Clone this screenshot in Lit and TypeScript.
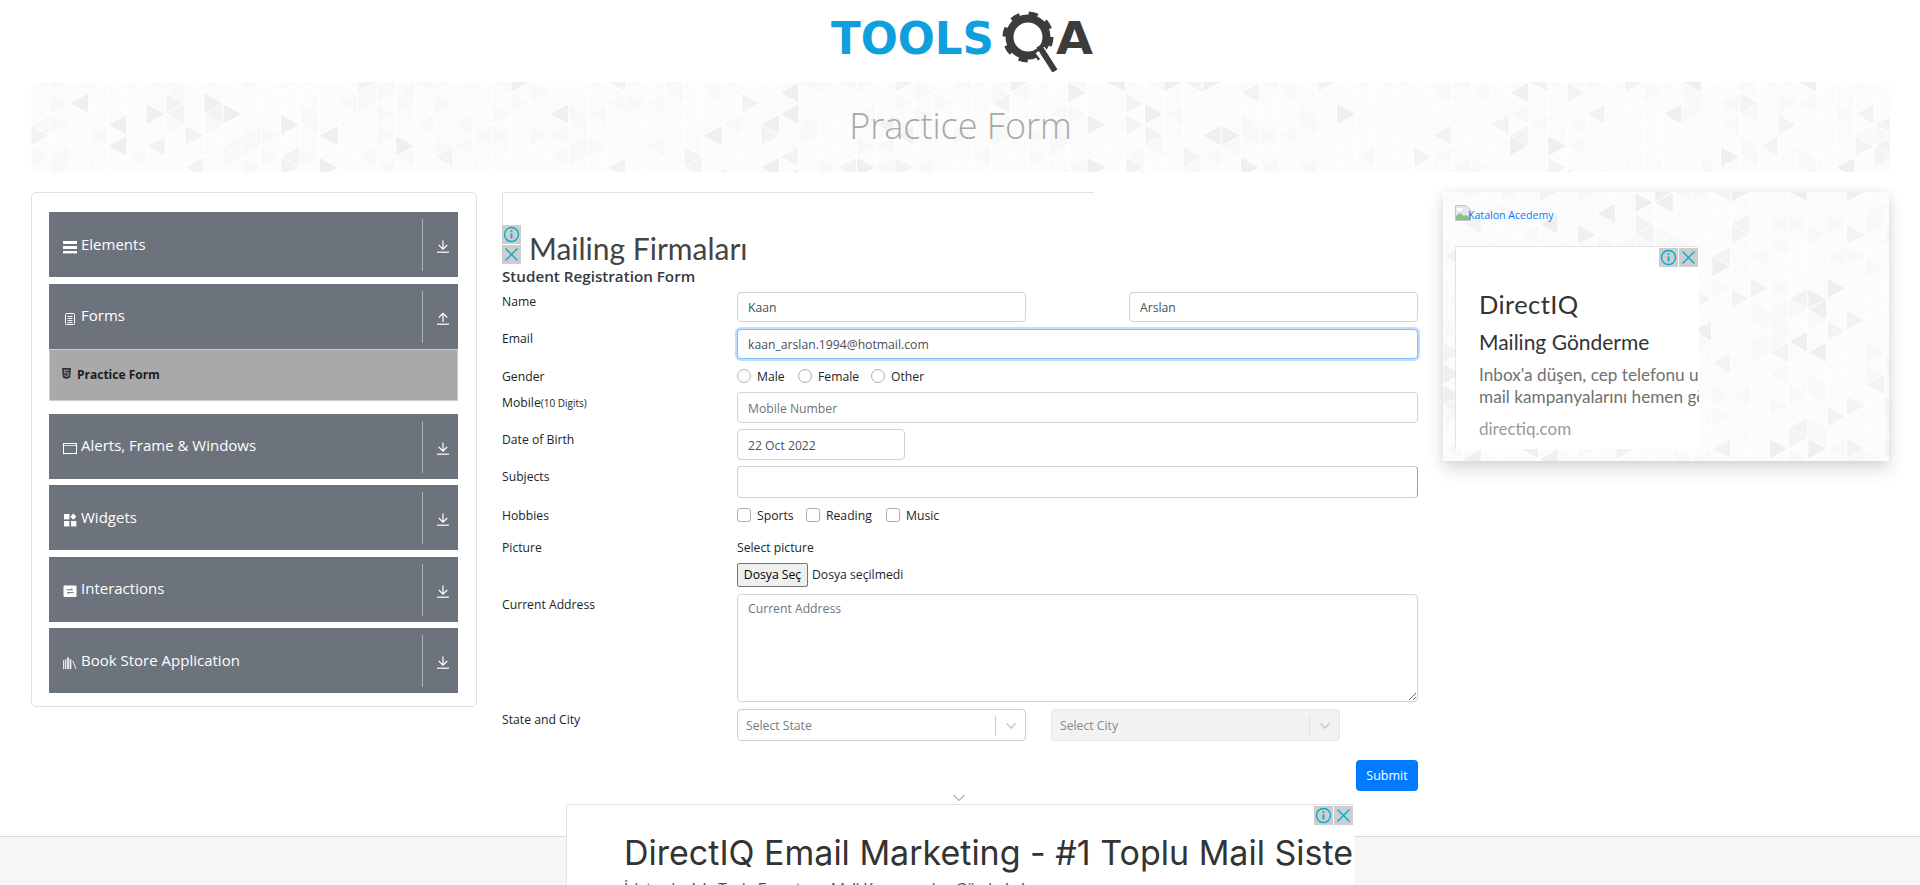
import { LitElement, html, css, svg } from "lit";
import { customElement, property } from "lit/decorators.js";

function triangles(width: number, height: number, seed: number) {
  const w = 19.2, h = 21.4;
  let s = seed;
  const rnd = () => { s = (s * 16807) % 2147483647; return s / 2147483647; };
  const out: string[] = [];
  const cols = Math.ceil(width / w) + 1;
  const rows = Math.ceil(height / h) + 2;
  const shade = () => {
    const r = rnd();
    if (r < 0.05) return "#efefef";
    if (r < 0.11) return "#f3f3f3";
    if (r < 0.28) return "#f8f8f8";
    if (r < 0.65) return "#fbfbfb";
    return "#fcfcfc";
  };
  for (let c = 0; c < cols; c++) {
    const x0 = c * w, x1 = x0 + w;
    const y0 = c % 2 ? h / 2 : 0;
    for (let r = -1; r < rows; r++) {
      const a = y0 + r * h;
      const b = a + h;
      const m = a + h / 2;
      out.push(`${x0},${a} ${x0},${b} ${x1},${m}`);
      out.push(`${x1},${m} ${x1},${m + h} ${x0},${b}`);
    }
  }
  return out.map((p) => ({ p, f: shade() }));
}

@customElement("tri-pattern")
class TriPattern extends LitElement {
  @property({ type: Number }) w = 400;
  @property({ type: Number }) h = 100;
  @property({ type: Number }) seed = 7;
  static styles = css`
    :host { position: absolute; inset: 0; overflow: hidden; display: block; }
    svg { display: block; }
    polygon { stroke: #ffffff; stroke-width: 1; }
  `;
  render() {
    return html`<svg width=${this.w} height=${this.h} aria-hidden="true">
      ${triangles(this.w, this.h, this.seed).map(
        (t) => svg`<polygon points=${t.p} fill=${t.f}></polygon>`
      )}
    </svg>`;
  }
}

const down = html`<svg width="12" height="13" viewBox="0 0 12 13" fill="none" stroke="#fff" stroke-width="1.2"><path d="M6 0.5V9M1.8 5L6 9.2L10.2 5"/><path d="M0 12.2H12"/></svg>`;
const up = html`<svg width="12" height="13" viewBox="0 0 12 13" fill="none" stroke="#fff" stroke-width="1.2"><path d="M6 10V1.5M1.8 5.5L6 1.3L10.2 5.5"/><path d="M0 12.2H12"/></svg>`;

const icons: Record<string, unknown> = {
  bars: html`<svg width="14" height="14" viewBox="0 0 14 14" fill="#fff"><rect y="1" width="14" height="3"/><rect y="6" width="14" height="3"/><rect y="11" width="14" height="2.4"/></svg>`,
  doc: html`<svg width="14" height="14" viewBox="0 0 14 14" fill="none" stroke="#fff" stroke-width="1"><rect x="2.5" y="2.5" width="9" height="11" rx="1"/><path d="M4.5 5.5H9.5M4.5 7.5H9.5M4.5 9.5H9.5M4.5 11.5H9.5" stroke-width=".9"/></svg>`,
  win: html`<svg width="14" height="14" viewBox="0 0 14 14" fill="none" stroke="#fff" stroke-width="1"><rect x=".5" y="2.5" width="13" height="10"/><path d="M.5 4.5H13.5" stroke-dasharray="2 .6"/></svg>`,
  widgets: html`<svg width="14" height="14" viewBox="0 0 14 14" fill="#fff"><rect x="1" y="1" width="5.4" height="5.4"/><path d="M10.3 .6L13.4 3.7L10.3 6.8L7.2 3.7Z"/><rect x="1" y="8" width="5.4" height="5.4"/><rect x="8" y="8" width="5.4" height="5.4"/></svg>`,
  inter: html`<svg width="14" height="14" viewBox="0 0 14 14"><rect x=".5" y="1.5" width="13" height="11.5" rx="1" fill="#fff"/><path d="M3.5 5.8H9.5L8 4.5M10.5 8.6H4.5L6 10" fill="none" stroke="#6c737c" stroke-width="1"/></svg>`,
  books: html`<svg width="15" height="14" viewBox="0 0 15 14" fill="#e8e8e8"><rect x="0" y="4" width="1.2" height="9.5"/><rect x="2" y="3" width="1.6" height="10.5"/><rect x="4.4" y="1" width="2.2" height="12.5"/><rect x="7.2" y="3" width="1.8" height="10.5"/><path d="M10 5L11 4.7L14.6 13.3L13.6 13.6Z"/></svg>`,
};

const infoSvg = html`<svg width="19" height="19" viewBox="0 0 19 19" fill="none" stroke="#00aecd" stroke-width="1.4"><circle cx="9.5" cy="9.5" r="7"/><path d="M9.5 8.4V13.4" stroke-width="1.8"/><path d="M9.5 5.2V6.9" stroke-width="1.8"/></svg>`;
const closeSvg = html`<svg width="19" height="19" viewBox="0 0 19 19" fill="none" stroke="#00aecd" stroke-width="1.4"><path d="M3.5 3.5L15.5 15.5M15.5 3.5L3.5 15.5"/></svg>`;

@customElement("app-root")
export class AppRoot extends LitElement {
  static styles = css`
    :host { display: block; font-family: "Open Sans", "Noto Sans", sans-serif; color: #212529; font-size: 12.2px; line-height: 20px; position: relative; overflow: hidden; height: 885px; background: #fff; }
    * { box-sizing: border-box; }
    .page { display: flex; flex-direction: column; height: 885px; }
    .head { height: 82px; display: flex; justify-content: center; flex: none; }
    .logo { display: block; margin-left: 12px; }
    .logo .t { font-family: "DejaVu Sans", "Liberation Sans", sans-serif; font-weight: 700; font-size: 45px; }
    .banner { position: relative; flex: none; margin: 0 30px 0 31px; height: 90px; display: flex; align-items: center; justify-content: center; overflow: hidden; }
    .banner h1 { position: relative; margin: 0 0 2px 0; font-weight: 300; font-size: 36px; line-height: 44px; color: #a8a8a8; }
    .main { flex: 1; display: grid; grid-template-columns: 446px 916px 446px; gap: 25px; padding: 20px 31px 0; align-items: start; min-height: 0; }
    .left { border: 1px solid #dfdfdf; border-radius: 5px; padding: 19px 18px 13px 17px; height: 515px; display: flex; flex-direction: column; }
    .grp { height: 65px; flex: none; margin-bottom: 6.6px; background: #6c737c; color: #fff; display: flex; align-items: stretch; font-size: 15px; }
    .grp.open { margin-bottom: 0; }
    .ic { width: 14px; margin-left: 14px; flex: none; display: flex; align-items: center; position: relative; top: 2px; }
    .ic svg { display: block; }
    .gt { margin-left: 4px; flex: 1; align-self: center; line-height: 22px; position: relative; top: -1px; white-space: nowrap; }
    .ar { width: 36px; margin: 7px 0 6px; border-left: 1px solid #adb1b6; padding: 21px 0 0 14px; flex: none; }
    .ar svg { display: block; }
    .sub { height: 52px; flex: none; margin-bottom: 13px; background: #a9a9a9; border: 1px solid #c9ccd1; display: flex; align-items: center; padding: 1px 0 0 12px; color: #1c1c20; font-weight: 700; font-size: 12px; }
    .sub svg { margin-right: 6px; display: block; position: relative; top: -2px; }
    .form { display: flex; flex-direction: column; min-width: 0; }
    .topad { position: relative; height: 73px; width: 592px; border-top: 1px solid #e3e3e3; flex: none; }
    .topad::before { content: ""; position: absolute; left: 0; top: 0; width: 1px; height: 32px; background: #e3e3e3; }
    .adbtns { position: absolute; left: 0; top: 32px; width: 20px; display: flex; flex-direction: column; gap: 1px; }
    .ab { width: 19px; height: 19px; background: #cdcdcd; display: block; flex: none; }
    .ab svg { display: block; }
    .adtitle { position: absolute; left: 27px; top: 35px; font: 400 30px/40px Lato, sans-serif; color: #444; white-space: nowrap; }
    .formh { margin: 0; font-size: 15.2px; font-weight: 600; line-height: 20px; height: 27px; padding-top: 1px; color: #343a40; flex: none; }
    .row { display: grid; grid-template-columns: 235px 681px; flex: none; margin-bottom: 6px; }
    .row.g7 { margin-bottom: 7px; }
    .lab { white-space: nowrap; padding-top: 1px; height: 20px; }
    .lab.top0 { padding-top: 0; }
    .lab small { font-size: 10px; }
    .in { display: block; width: 100%; height: 30px; border: 1px solid #ced4da; border-radius: 4px; padding: 1px 10px 0; font: inherit; color: #495057; background: #fff; outline: none; }
    .in::placeholder { color: #6c757d; opacity: 1; }
    .h31 { height: 31px; }
    .h32 { height: 32px; }
    .subject { border-right-color: #a0a0a0; }
    .in.focus { border-color: #80bdff; box-shadow: 0 0 0 2px rgba(0, 123, 255, 0.25); }
    .two { display: flex; justify-content: space-between; }
    .two .in { width: 289px; }
    .date { width: 168px; }
    .inl { display: flex; align-items: center; height: 20px; }
    .inl input { appearance: none; margin: 0 6px 0 0; width: 14px; height: 14px; background: #fff; border: 1px solid #a9b0b8; flex: none; }
    .inl input[type="radio"] { border-radius: 50%; }
    .inl input[type="checkbox"] { border-radius: 3px; }
    .inl span { white-space: nowrap; position: relative; top: 1px; }
    .w41 { width: 41px; }
    .w53 { width: 53px; }
    .w49 { width: 49px; }
    .w60 { width: 60px; }
    .pic { display: flex; flex-direction: column; }
    .filerow { display: flex; align-items: center; height: 24px; margin-top: 6px; }
    .filebtn { height: 24px; width: 71px; border: 1px solid #767676; border-radius: 2px; background: #efefef; font: inherit; color: #000; padding: 0; margin-right: 4px; white-space: nowrap; }
    textarea.in { height: 108px; padding: 4px 10px; resize: both; }
    .sels { display: flex; gap: 25px; }
    .sel { width: 289px; height: 32px; border: 1px solid #cccccc; border-radius: 4px; display: flex; align-items: center; padding: 1px 0 0 8px; color: #7a7a7a; background: #fff; position: relative; }
    .sel .v { flex: 1; }
    .sel .sep { width: 1px; height: 20px; background: #ccc; }
    .sel .cv { width: 29px; display: flex; justify-content: center; }
    .sel.off { background: #f2f2f2; border-color: #e6e6e6; color: #888; }
    .sel.off .sep { background: #e0e0e0; }
    .subm { align-self: flex-end; margin-top: 19px; height: 31px; width: 62px; padding: 0; border: 0; border-radius: 4px; background: #007bff; color: #fff; font: inherit; font-size: 12.5px; }
    .right { position: relative; height: 269px; box-shadow: 0 8px 16px rgba(0, 0, 0, 0.15), 0 0 8px rgba(0, 0, 0, 0.06); padding: 13px 12px 0; }
    .klink { position: relative; display: flex; align-items: flex-start; height: 41px; color: #007bff; font-size: 10.6px; line-height: 20px; white-space: nowrap; }
    .klink svg { display: block; flex: none; margin-right: -3px; }
    .radbox { position: relative; width: 244px; height: 203px; background: #fff; border-top: 1px solid #e3e3e3; border-left: 1px solid #e3e3e3; overflow: hidden; font-family: Lato, sans-serif; padding: 0 0 0 23px; white-space: nowrap; }
    .radbtns { position: absolute; top: 1px; right: 1px; display: flex; gap: 1px; }
    .r1 { font-size: 25.5px; line-height: 30px; margin-top: 42px; color: #333; letter-spacing: .4px; }
    .r2 { font-size: 21px; line-height: 26px; margin-top: 10px; color: #333; }
    .r3 { font-size: 17.2px; line-height: 22px; margin-top: 9px; color: #717171; }
    .r3b { margin-top: 0; }
    .r4 { font-size: 17px; line-height: 22px; margin-top: 10px; color: #9a9a9a; }
    .foot { flex: none; height: 49px; background: #f6f6f6; border-top: 1px solid #dcdcdc; }
    .botad { position: absolute; left: 566px; top: 804px; width: 788px; height: 81px; }
    .chev { position: absolute; left: 386px; top: -10px; display: block; }
    .botin { position: relative; width: 100%; height: 100%; background: #fff; border-top: 1px solid #e3e3e3; border-left: 1px solid #e3e3e3; overflow: hidden; padding-left: 57px; white-space: nowrap; font-family: Inter, sans-serif; }
    .bt { font-size: 34px; line-height: 44px; margin-top: 26px; color: #333; }
    .bs { font-size: 15px; line-height: 20px; margin-top: 3px; color: #555; font-family: Lato, sans-serif; }
  `;

  private grp(icon: string, label: string, open = false) {
    return html`<div class="grp ${open ? "open" : ""}">
      <span class="ic">${icons[icon]}</span>
      <span class="gt">${label}</span>
      <span class="ar">${open ? up : down}</span>
    </div>`;
  }

  render() {
    const chev = (c: string) => html`<svg width="12" height="8" viewBox="0 0 12 8" fill="none" stroke=${c} stroke-width="1.6"><path d="M1.5 1.5L6 6L10.5 1.5"/></svg>`;
    return html`
      <div class="page">
        <header class="head">
          <svg class="logo" width="270" height="72" viewBox="0 0 270 72" role="img" aria-label="Tools QA">
            <text class="t" x="0" y="54" fill="#0e9fdc" textLength="163" lengthAdjust="spacingAndGlyphs">TOOLS</text>
            <circle cx="197" cy="37" r="18.5" fill="none" stroke="#3c3c3c" stroke-width="8"/>
            <circle cx="197" cy="37" r="23" fill="none" stroke="#3c3c3c" stroke-width="5" stroke-dasharray="9 9.06"/>
            <path d="M209 50L226 72" stroke="#fff" stroke-width="11" fill="none"/>
            <path d="M208 46L224 71" stroke="#3c3c3c" stroke-width="6" fill="none"/>
            <text class="t" x="225" y="54" fill="#3c3c3c" textLength="37" lengthAdjust="spacingAndGlyphs">A</text>
          </svg>
        </header>
        <div class="banner">
          <tri-pattern .w=${1860} .h=${90} .seed=${1234}></tri-pattern>
          <h1>Practice Form</h1>
        </div>
        <main class="main">
          <aside class="left">
            ${this.grp("bars", "Elements")}
            ${this.grp("doc", "Forms", true)}
            <div class="sub">
              <svg width="9" height="11" viewBox="0 0 9 11"><path d="M0 0H9L8.2 9.4L4.5 11L.8 9.4Z" fill="#333"/><path d="M6.8 2.2H2.2L2.5 4.8H6.4L6.1 7.8L4.5 8.4L2.9 7.8L2.8 6.6" fill="none" stroke="#bbb" stroke-width=".8"/></svg>
              Practice Form
            </div>
            ${this.grp("win", "Alerts, Frame & Windows")}
            ${this.grp("widgets", "Widgets")}
            ${this.grp("inter", "Interactions")}
            ${this.grp("books", "Book Store Application")}
          </aside>
          <section class="form">
            <div class="topad">
              <div class="adbtns"><span class="ab">${infoSvg}</span><span class="ab">${closeSvg}</span></div>
              <div class="adtitle">Mailing Firmaları</div>
            </div>
            <h2 class="formh">Student Registration Form</h2>
            <div class="row g7"><div class="lab top0">Name</div><div class="two"><input class="in" .value=${"Kaan"} /><input class="in" .value=${"Arslan"} /></div></div>
            <div class="row g7"><div class="lab top0">Email</div><input class="in focus" .value=${"kaan_arslan.1994@hotmail.com"} /></div>
            <div class="row"><div class="lab">Gender</div><div class="inl"><input type="radio" name="g" /><span class="w41">Male</span><input type="radio" name="g" /><span class="w53">Female</span><input type="radio" name="g" /><span>Other</span></div></div>
            <div class="row"><div class="lab">Mobile<small>(10 Digits)</small></div><input class="in h31" placeholder="Mobile Number" /></div>
            <div class="row"><div class="lab">Date of Birth</div><input class="in h31 date" .value=${"22 Oct 2022"} /></div>
            <div class="row g7"><div class="lab">Subjects</div><input class="in h32 subject" /></div>
            <div class="row" style="margin-bottom:12px"><div class="lab">Hobbies</div><div class="inl"><input type="checkbox" /><span class="w49">Sports</span><input type="checkbox" /><span class="w60">Reading</span><input type="checkbox" /><span>Music</span></div></div>
            <div class="row g7"><div class="lab">Picture</div><div class="pic"><div class="lab">Select picture</div><div class="filerow"><button class="filebtn">Dosya Seç</button><span>Dosya seçilmedi</span></div></div></div>
            <div class="row g7"><div class="lab">Current Address</div><textarea class="in" placeholder="Current Address"></textarea></div>
            <div class="row" style="margin-bottom:0"><div class="lab">State and City</div><div class="sels">
              <div class="sel"><span class="v">Select State</span><span class="sep"></span><span class="cv">${chev("#cccccc")}</span></div>
              <div class="sel off"><span class="v">Select City</span><span class="sep"></span><span class="cv">${chev("#cccccc")}</span></div>
            </div></div>
            <button class="subm">Submit</button>
          </section>
          <aside class="right">
            <tri-pattern .w=${446} .h=${269} .seed=${98765}></tri-pattern>
            <div class="klink">
              <svg width="16" height="16" viewBox="0 0 16 16"><path d="M.5 .5H11L15.5 5V15.5H.5Z" fill="#e6e6ee" stroke="#c4c4cc"/><path d="M1 14V11L5 8L9 11L11 10L15 13V15H1Z" fill="#8fbf85"/><path d="M2 3H7V6H2Z" fill="#fff"/></svg>
              <span>Katalon Acedemy</span>
            </div>
            <div class="radbox">
              <div class="radbtns"><span class="ab">${infoSvg}</span><span class="ab">${closeSvg}</span></div>
              <div class="r1">DirectIQ</div>
              <div class="r2">Mailing Gönderme</div>
              <div class="r3">Inbox'a düşen, cep telefonu uyumlu e-</div>
              <div class="r3 r3b">mail kampanyalarını hemen gönderin</div>
              <div class="r4">directiq.com</div>
            </div>
          </aside>
        </main>
        <footer class="foot"></footer>
      </div>
      <div class="botad">
        <svg class="chev" width="14" height="8" viewBox="0 0 14 8" fill="none" stroke="#777" stroke-width="1"><path d="M1.5 1L7 6.5L12.5 1"/></svg>
        <div class="botin">
          <div class="radbtns"><span class="ab">${infoSvg}</span><span class="ab">${closeSvg}</span></div>
          <div class="bt">DirectIQ Email Marketing - #1 Toplu Mail Sistemi</div>
          <div class="bs">İşletmeler için Toplu E-posta ve Mail Kampanyaları Gönderimi</div>
        </div>
      </div>
    `;
  }
}
